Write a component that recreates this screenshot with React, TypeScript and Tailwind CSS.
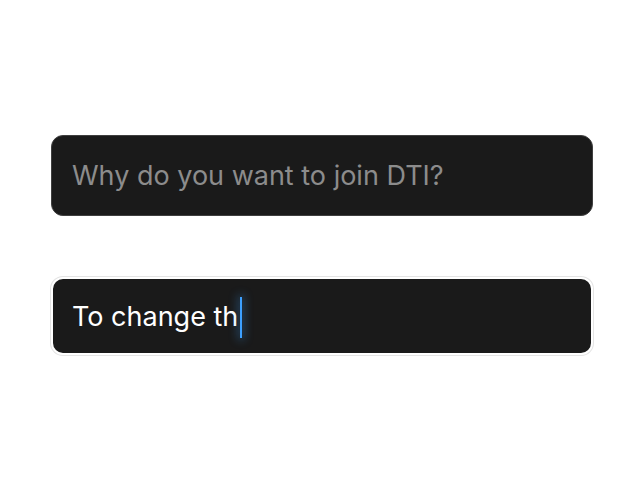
export default function App() {
  return (
    <div className="min-h-[491px] w-[640px] bg-white pt-[135px] pl-[51px] pr-[47px]" style={{ fontFamily: 'Inter, "Noto Sans", sans-serif' }}>
      <div className="flex flex-col gap-[61px]">
        <div className="flex h-[81px] items-center rounded-[12px] border border-[#3f3f3f] bg-[#1a1a1a] pl-[20px] pt-[2px]">
          <span className="text-[27px] text-[#8c8c8c]">Why do you want to join DTI?</span>
        </div>
        <div className="flex h-[78px] items-center rounded-[12px] border-2 border-white bg-[#1a1a1a] pl-[19px] pt-[2px] shadow-[0_0_0_1px_#e4e4e4]">
          <span className="text-[27px] text-white">To change th</span>
          <span className="ml-[2px] h-[41px] w-[2px] bg-[#3da0ff] shadow-[0_0_10px_2px_rgba(61,160,255,0.35)]" />
        </div>
      </div>
    </div>
  );
}
